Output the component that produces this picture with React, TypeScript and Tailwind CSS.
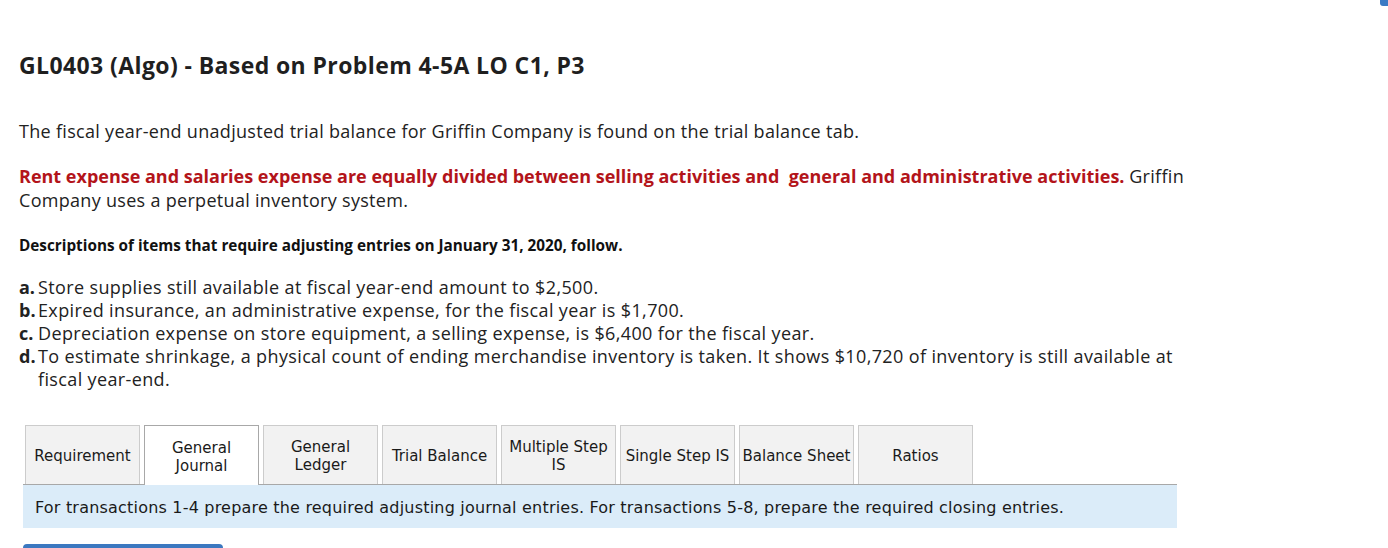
import React from 'react'

const tabs = [
  { label: 'Requirement' },
  { label: 'General Journal', lines: ['General', 'Journal'], active: true },
  { label: 'General Ledger', lines: ['General', 'Ledger'] },
  { label: 'Trial Balance' },
  { label: 'Multiple Step IS', lines: ['Multiple Step', 'IS'] },
  { label: 'Single Step IS' },
  { label: 'Balance Sheet' },
  { label: 'Ratios' },
]

const items = [
  { key: 'a.', text: 'Store supplies still available at fiscal year-end amount to $2,500.' },
  { key: 'b.', text: 'Expired insurance, an administrative expense, for the fiscal year is $1,700.' },
  { key: 'c.', text: 'Depreciation expense on store equipment, a selling expense, is $6,400 for the fiscal year.' },
  {
    key: 'd.',
    text: 'To estimate shrinkage, a physical count of ending merchandise inventory is taken. It shows $10,720 of inventory is still available at fiscal year-end.',
  },
]

export default function App() {
  return (
    <div className="relative h-[548px] w-[1388px] overflow-hidden bg-white text-[#222] font-['Open_Sans',sans-serif]">
      {/* corner marker */}
      <div className="absolute right-0 top-0 h-[6px] w-[8px] rounded-bl-[3px] bg-[#3a7ac4]" />

      <div className="pl-[19px] pt-[51px]">
        <h1 className="text-[23px] leading-[28px] font-bold tracking-[0.4px] text-[#1f1f1f]">
          GL0403 (Algo) - Based on Problem 4-5A LO C1, P3
        </h1>

        <p className="mt-[40px] text-[18px] leading-[24px] tracking-[0.3px]">
          The fiscal year-end unadjusted trial balance for Griffin Company is found on the trial balance tab.
        </p>

        <p className="mt-[21px] w-[1178px] text-[18px] leading-[24px]">
          <span className="font-bold text-[#b3141a]">
            Rent expense and salaries expense are equally divided between selling activities and&nbsp; general and
            administrative activities.
          </span>{' '}
          <span className="tracking-[0.3px]">Griffin Company uses a perpetual inventory system.</span>
        </p>

        <p className="mt-[23px] text-[15.3px] leading-[20px] font-bold text-[#111]">
          Descriptions of items that require adjusting entries on January 31, 2020, follow.
        </p>

        <ul className="mt-[21px] w-[1160px] text-[18px] leading-[23px] tracking-[0.37px]">
          {items.map((it) => (
            <li key={it.key} className="flex">
              <span className="w-[19px] shrink-0 font-bold tracking-normal">{it.key}</span>
              <span>{it.text}</span>
            </li>
          ))}
        </ul>
      </div>

      <div className="ml-[23px] mt-[34px] w-[1154px] font-['DejaVu_Sans',sans-serif] text-[15px] text-[#1a1a1a]">
        <div className="flex items-end gap-[4px] border-b border-[#a8a8a8] pl-[2px]">
          {tabs.map((t) =>
            t.active ? (
              <div
                key={t.label}
                className="-mb-px flex h-[60px] w-[115px] flex-col items-center justify-center border border-b-0 border-[#a8a8a8] bg-white pt-[2px] text-center leading-[18px]"
              >
                {t.lines ? t.lines.map((l) => <span key={l}>{l}</span>) : t.label}
              </div>
            ) : (
              <div
                key={t.label}
                className="flex h-[59px] w-[115px] flex-col items-center justify-center border border-b-0 border-[#cccccc] bg-[#f2f2f2] pt-[2px] text-center leading-[18px]"
              >
                {t.lines ? t.lines.map((l) => <span key={l}>{l}</span>) : t.label}
              </div>
            )
          )}
        </div>
        <div className="flex h-[43px] items-center bg-[#dbecf9] pl-[12px] pt-[2px] text-[16px] tracking-[0.2px]">
          For transactions 1-4 prepare the required adjusting journal entries. For transactions 5-8, prepare the
          required closing entries.
        </div>
      </div>

      <div className="ml-[23px] mt-[16px] h-[10px] w-[200px] rounded-t-[4px] bg-[#3b78c0]" />
    </div>
  )
}
